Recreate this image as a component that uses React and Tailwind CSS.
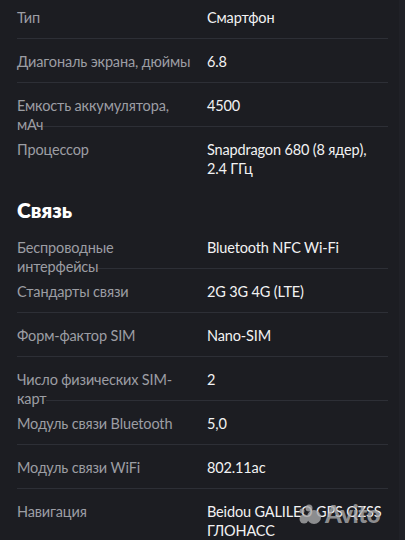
const groups = [
  {
    title: null,
    rows: [
      ["Тип", "Смартфон"],
      ["Диагональ экрана, дюймы", "6.8"],
      ["Емкость аккумулятора, мАч", "4500"],
      ["Процессор", "Snapdragon 680 (8 ядер), 2.4 ГГц"],
    ],
  },
  {
    title: "Связь",
    rows: [
      ["Беспроводные интерфейсы", "Bluetooth NFC Wi-Fi"],
      ["Стандарты связи", "2G 3G 4G (LTE)"],
      ["Форм-фактор SIM", "Nano-SIM"],
      ["Число физических SIM-карт", "2"],
      ["Модуль связи Bluetooth", "5,0"],
      ["Модуль связи WiFi", "802.11ac"],
      ["Навигация", "Beidou GALILEO GPS QZSS ГЛОНАСС"],
    ],
  },
];

const SpecRow = ({ label, value, last }) => (
  <div
    className={`flex h-[44px] shrink-0 pt-[13px] text-[14.5px] leading-[19px] tracking-[-0.15px] ${
      last ? "" : "border-b border-[#2d2f36]"
    }`}
  >
    <div className="w-[190px] shrink-0 pr-[14px]">
      <span className="relative z-10 bg-[#1c1d22] text-[#9c9ea4]">{label}</span>
    </div>
    <div className="flex-1 text-[#f2f2f3]">{value}</div>
  </div>
);

const AvitoMark = () => (
  <div className="pointer-events-none absolute bottom-[14px] left-[299px] z-20 flex items-center gap-[2px] opacity-80">
    <svg width="24" height="22" viewBox="0 0 24 22">
      <circle cx="15" cy="14" r="7" fill="#a9a9ab" />
      <circle cx="5" cy="16" r="4.5" fill="#a9a9ab" />
      <circle cx="10" cy="5" r="3.5" fill="#a9a9ab" />
      <circle cx="3" cy="8" r="2.5" fill="#a9a9ab" />
    </svg>
    <span className="font-['Lato',sans-serif] text-[24px] font-black leading-none tracking-[-0.5px] text-[#a9a9ab]">
      Avito
    </span>
  </div>
);

export default function App() {
  return (
    <div className="relative h-[540px] w-[405px] overflow-hidden bg-[#1c1d22] font-['Lato','Noto_Sans',sans-serif]">
      <div className="absolute right-0 top-0 h-full w-[6px] bg-[#202127]" />
      <div className="-mt-[5px] flex flex-col pl-[17px] pr-[17px]">
        {groups.map((g, gi) => (
          <div key={gi} className="flex flex-col">
            {g.title && (
              <h2 className="mt-[26px] mb-[2px] text-[21px] font-extrabold leading-[26px] text-white">
                {g.title}
              </h2>
            )}
            {g.rows.map(([label, value], i) => (
              <SpecRow
                key={label}
                label={label}
                value={value}
                last={i === g.rows.length - 1}
              />
            ))}
          </div>
        ))}
      </div>
      <AvitoMark />
    </div>
  );
}
